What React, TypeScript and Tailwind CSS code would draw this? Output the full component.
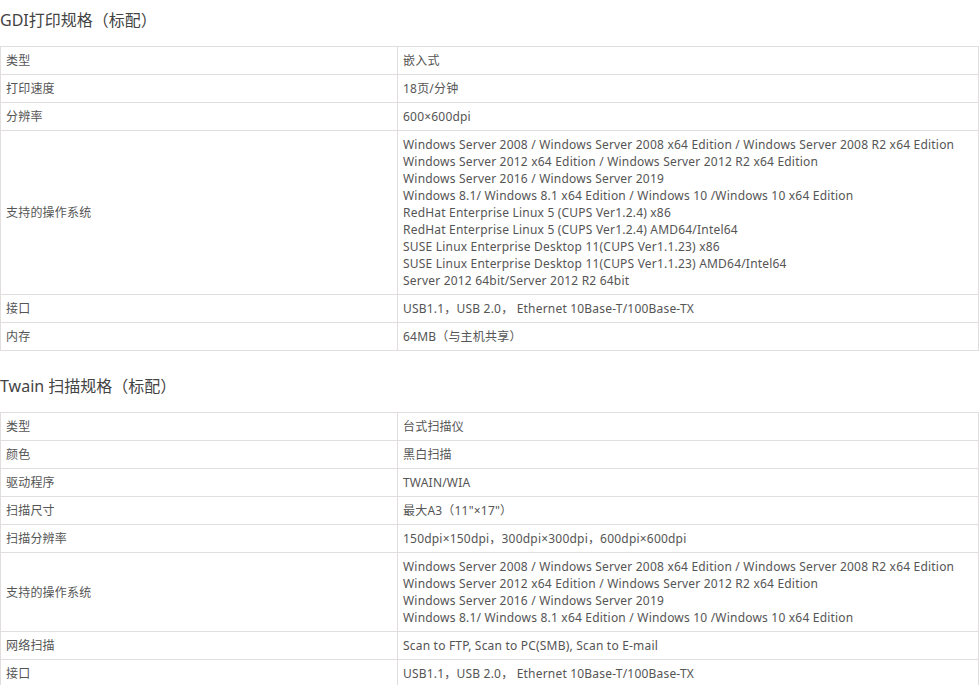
const FONT = "font-['Noto_Sans','Noto_Sans_CJK_SC',sans-serif]";

const WIN_OS = [
  "Windows Server 2008 / Windows Server 2008 x64 Edition / Windows Server 2008 R2 x64 Edition",
  "Windows Server 2012 x64 Edition / Windows Server 2012 R2 x64 Edition",
  "Windows Server 2016 / Windows Server 2019",
  "Windows 8.1/ Windows 8.1 x64 Edition / Windows 10 /Windows 10 x64 Edition",
];

const gdiRows: [string, string[]][] = [
  ["类型", ["嵌入式"]],
  ["打印速度", ["18页/分钟"]],
  ["分辨率", ["600×600dpi"]],
  [
    "支持的操作系统",
    [
      ...WIN_OS,
      "RedHat Enterprise Linux 5 (CUPS Ver1.2.4) x86",
      "RedHat Enterprise Linux 5 (CUPS Ver1.2.4) AMD64/Intel64",
      "SUSE Linux Enterprise Desktop 11(CUPS Ver1.1.23) x86",
      "SUSE Linux Enterprise Desktop 11(CUPS Ver1.1.23) AMD64/Intel64",
      "Server 2012 64bit/Server 2012 R2 64bit",
    ],
  ],
  ["接口", ["USB1.1，USB 2.0， Ethernet 10Base-T/100Base-TX"]],
  ["内存", ["64MB（与主机共享）"]],
];

const twainRows: [string, string[]][] = [
  ["类型", ["台式扫描仪"]],
  ["颜色", ["黑白扫描"]],
  ["驱动程序", ["TWAIN/WIA"]],
  ["扫描尺寸", ["最大A3（11\"×17\"）"]],
  ["扫描分辨率", ["150dpi×150dpi，300dpi×300dpi，600dpi×600dpi"]],
  ["支持的操作系统", WIN_OS],
  ["网络扫描", ["Scan to FTP, Scan to PC(SMB), Scan to E-mail"]],
  ["接口", ["USB1.1，USB 2.0， Ethernet 10Base-T/100Base-TX"]],
];

function SpecTable({ title, rows, first }: { title: string; rows: [string, string[]][]; first?: boolean }) {
  return (
    <section className={first ? "pt-2" : "mt-[23px]"}>
      <h2 className="text-[16px] leading-6 font-normal text-[#444] mb-[14px]">{title}</h2>
      <table className="w-[979px] border-collapse table-fixed text-[12px] leading-[17px] tracking-[0.2px] text-[#555]">
        <colgroup>
          <col className="w-[397px]" />
          <col />
        </colgroup>
        <tbody>
          {rows.map(([k, v]) => (
            <tr key={k + v[0]}>
              <td className="border border-[#e2dede] px-[5px] py-[5px] align-middle">{k}</td>
              <td className="border border-[#e2dede] px-[5px] py-[5px] align-middle">
                {v.map((line) => (
                  <div key={line}>{line}</div>
                ))}
              </td>
            </tr>
          ))}
        </tbody>
      </table>
    </section>
  );
}

export default function App() {
  return (
    <div className={`${FONT} bg-white w-[979px] h-[685px] overflow-hidden`}>
      <SpecTable first title="GDI打印规格（标配）" rows={gdiRows} />
      <SpecTable title="Twain 扫描规格（标配）" rows={twainRows} />
    </div>
  );
}
